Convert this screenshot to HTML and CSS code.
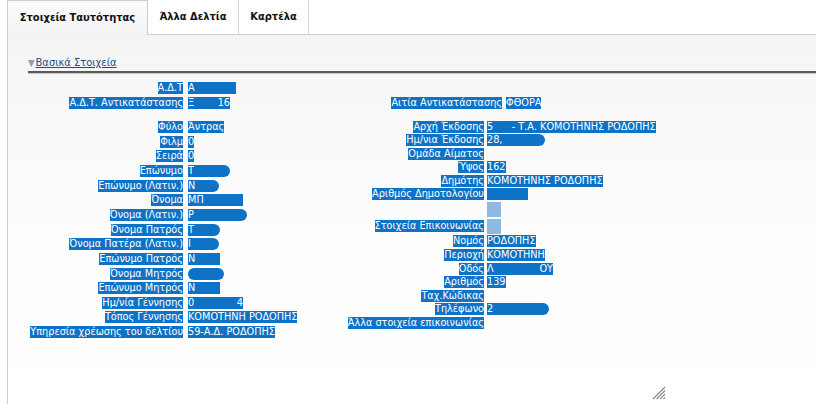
FILE: index.html
```html
<!DOCTYPE html>
<html lang="el">
<head>
<meta charset="utf-8">
<title>Στοιχεία Ταυτότητας</title>
<link rel="stylesheet" href="styles.css">
</head>
<body>
<div class="tabs">
  <div class="tab active">Στοιχεία Ταυτότητας</div>
  <div class="tab t2">Άλλα Δελτία</div>
  <div class="tab t3">Καρτέλα</div>
  <div class="tab-fill"></div>
</div>
<div class="panel">
  <div class="section-head"><a class="toggle" href="#"><span class="tri">▼</span>Βασικά Στοιχεία</a></div>
  <div class="rule"></div>
  <div class="fields">
    <div class="left">
      <div class="l"><span class="hl">Α.Δ.Τ</span></div><div class="v"><span class="hl w48">Α</span></div>
      <div class="l"><span class="hl">Α.Δ.Τ. Αντικατάστασης</span></div><div class="v"><span class="hl w42 split"><i>Ξ</i><i>16</i></span></div>
      <div class="gap"></div><div class="gap"></div>
      <div class="l"><span class="hl">Φύλο</span></div><div class="v"><span class="hl">Άντρας</span></div>
      <div class="l"><span class="hl">Φιλμ</span></div><div class="v"><span class="hl">0</span></div>
      <div class="l"><span class="hl">Σειρά</span></div><div class="v"><span class="hl">0</span></div>
      <div class="l"><span class="hl">Επώνυμο</span></div><div class="v"><span class="hl w42 rr">Τ</span></div>
      <div class="l"><span class="hl">Επώνυμο (Λατιν.)</span></div><div class="v"><span class="hl w31 rr">Ν</span></div>
      <div class="l"><span class="hl">Όνομα</span></div><div class="v"><span class="hl w55">ΜΠ</span></div>
      <div class="l"><span class="hl">Όνομα (Λατιν.)</span></div><div class="v"><span class="hl w59 rr">Ρ</span></div>
      <div class="l"><span class="hl">Όνομα Πατρός</span></div><div class="v"><span class="hl w32 rr">Τ</span></div>
      <div class="l"><span class="hl">Όνομα Πατέρα (Λατιν.)</span></div><div class="v"><span class="hl w31 rr">Ι</span></div>
      <div class="l"><span class="hl">Επώνυμο Πατρός</span></div><div class="v"><span class="hl w32">Ν</span></div>
      <div class="l"><span class="hl">Όνομα Μητρός</span></div><div class="v"><span class="hl w36 rb"></span></div>
      <div class="l"><span class="hl">Επώνυμο Μητρός</span></div><div class="v"><span class="hl w32">Ν</span></div>
      <div class="l"><span class="hl">Ημ/νία Γέννησης</span></div><div class="v"><span class="hl w55 split"><i>0</i><i>4</i></span></div>
      <div class="l"><span class="hl">Τόπος Γέννησης</span></div><div class="v"><span class="hl">ΚΟΜΟΤΗΝΗ ΡΟΔΟΠΗΣ</span></div>
      <div class="l"><span class="hl">Υπηρεσία χρέωσης του δελτίου</span></div><div class="v"><span class="hl">59-Α.Δ. ΡΟΔΟΠΗΣ</span></div>
    </div>
    <div class="rightcol">
      <div class="cause">
        <div class="l"><span class="hl">Αιτία Αντικατάστασης</span></div><div class="v"><span class="hl">ΦΘΟΡΑ</span></div>
      </div>
      <div class="right">
        <div class="l"><span class="hl">Αρχή Έκδοσης</span></div><div class="v"><span class="hl">5&nbsp;&nbsp;&nbsp;&nbsp;&nbsp;&nbsp;- Τ.Α. ΚΟΜΟΤΗΝΗΣ ΡΟΔΟΠΗΣ</span></div>
        <div class="l"><span class="hl">Ημ/νια Έκδοσης</span></div><div class="v"><span class="hl w58 rr">28,</span></div>
        <div class="l"><span class="hl">Ομάδα Αίματος</span></div><div class="v"></div>
        <div class="l"><span class="hl">Ύψος</span></div><div class="v"><span class="hl">162</span></div>
        <div class="l"><span class="hl">Δημότης</span></div><div class="v"><span class="hl">ΚΟΜΟΤΗΝΗΣ ΡΟΔΟΠΗΣ</span></div>
        <div class="l"><span class="hl">Αριθμός Δημοτολογίου</span></div><div class="v"><span class="hl w41"></span></div>
        <div class="l sq-row"></div><div class="v sq-row"><span class="sq"></span></div>
        <div class="l sq-row"><span class="hl">Στοιχεία Επικοινωνίας</span></div><div class="v sq-row"><span class="sq"></span></div>
        <div class="l"><span class="hl">Νομός</span></div><div class="v"><span class="hl">ΡΟΔΟΠΗΣ</span></div>
        <div class="l"><span class="hl">Περιοχή</span></div><div class="v"><span class="hl">ΚΟΜΟΤΗΝΗ</span></div>
        <div class="l"><span class="hl">Οδός</span></div><div class="v"><span class="hl w66 split"><i>Λ</i><i>ΟΥ</i></span></div>
        <div class="l"><span class="hl">Αριθμός</span></div><div class="v"><span class="hl">139</span></div>
        <div class="l"><span class="hl">Ταχ.Κώδικας</span></div><div class="v"></div>
        <div class="l"><span class="hl">Τηλέφωνο</span></div><div class="v"><span class="hl w62 rr">2</span></div>
        <div class="l"><span class="hl">Άλλα στοιχεία επικοινωνίας</span></div><div class="v"></div>
      </div>
    </div>
  </div>
  <svg class="grip" width="14" height="14" viewBox="0 0 14 14" aria-hidden="true">
    <path d="M13 1 L1 13 M13 4.5 L4.5 13 M13 8 L8 13 M13 11.5 L11.5 13" stroke="#8a8a8a" stroke-width="1.1" fill="none"/>
  </svg>
</div>
</body>
</html>
```

FILE: styles.css
```css
html, body {
  margin: 0;
  padding: 0;
  background: #fff;
  font-family: "DejaVu Sans Condensed", "DejaVu Sans", sans-serif;
  font-stretch: condensed;
  font-size: 10.8px;
  color: #000;
}

.tabs {
  display: flex;
  height: 35px;
  padding-left: 7px;
  box-sizing: border-box;
}

.tab {
  box-sizing: border-box;
  height: 35px;
  display: flex;
  align-items: center;
  justify-content: center;
  font-weight: bold;
  font-size: 11px;
  color: #111;
  background: #fff;
  border-right: 1px solid #d6d6d6;
  border-bottom: 1px solid #cfcfcf;
  padding-bottom: 1px;
}

.tab.active {
  width: 141px;
  background: linear-gradient(#fbfbfb, #f3f3f3);
  border: 1px solid #cdcdcd;
  border-bottom: none;
}

.tab.t2 { width: 91px; }
.tab.t3 { width: 70px; }

.tab-fill {
  flex: 1;
  border-bottom: 1px solid #cfcfcf;
}

.panel {
  position: relative;
  height: 369px;
  margin-left: 7px;
  border-left: 1px solid #cdcdcd;
  background: linear-gradient(#f4f4f4 0px, #f8f8f8 60px, #fdfdfd 200px, #fff 369px);
  box-sizing: border-box;
}

.section-head {
  padding: 20px 0 0 20px;
  height: 16px;
  line-height: 16px;
}

.toggle {
  color: #1d4f86;
  text-decoration: underline;
  font-size: 11px;
}

.tri {
  color: #8d9fb7;
  font-size: 9.5px;
  vertical-align: 0;
  text-decoration: none;
  display: inline-block;
  margin-right: 1px;
}

.rule {
  margin: 0 0 0 20px;
  height: 2px;
  background: #5a5a5a;
  border-bottom: 1px solid #c9c9c9;
}

.fields {
  display: flex;
  align-items: flex-start;
  padding-top: 7px;
}

.left {
  width: 332px;
  display: grid;
  grid-template-columns: 175px 1fr;
  grid-template-rows: 14.65px 14.65px 9.5px;
  column-gap: 5px;
  grid-auto-rows: 14.65px;
}

.l, .v {
  display: flex;
  align-items: center;
  white-space: nowrap;
}

.l { justify-content: flex-end; }

.hl {
  display: inline-flex;
  align-items: center;
  height: 12px;
  line-height: 12px;
  background: #0e72c7;
  color: #fff;
  box-sizing: border-box;
}

.split { justify-content: space-between; }
.split i { font-style: normal; }

.w31 { width: 31px; }
.w32 { width: 32px; }
.w36 { width: 36px; }
.w41 { width: 41px; }
.w42 { width: 42px; }
.w48 { width: 48px; }
.w55 { width: 55px; }
.w58 { width: 58px; }
.w59 { width: 59px; }
.w62 { width: 62px; }
.w66 { width: 66px; }

.rr { border-radius: 0 6px 6px 0; }
.rb { border-radius: 6px; }

.rightcol {
  display: flex;
  flex-direction: column;
}

.cause {
  display: grid;
  grid-template-columns: 162px auto;
  column-gap: 4px;
  grid-auto-rows: 14.65px;
  margin-top: 14.65px;
}

.right {
  display: grid;
  grid-template-columns: 144px auto;
  grid-template-rows: repeat(6, 13.4px) 17px 17px;
  column-gap: 3px;
  grid-auto-rows: 13.6px;
  margin-top: 10px;
}

.sq {
  display: inline-block;
  width: 14px;
  height: 15px;
  background: #8fb8e3;
}

.grip {
  position: absolute;
  left: 644px;
  top: 351px;
}
```
